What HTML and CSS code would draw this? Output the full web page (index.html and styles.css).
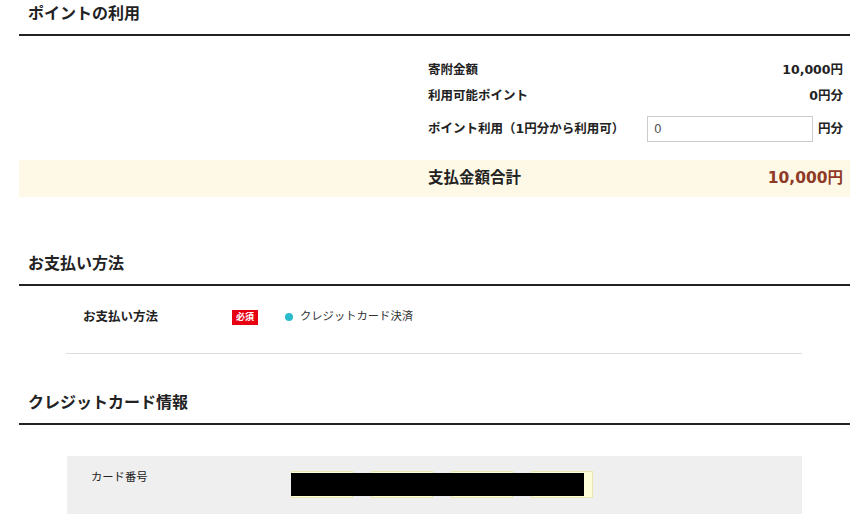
FILE: index.html
```html
<!DOCTYPE html>
<html lang="ja">
	<head>
		<meta charset="UTF-8" />
		<meta name="viewport" content="width=device-width, initial-scale=1.0" />
		<title>お支払い</title>
		<link rel="stylesheet" href="styles.css">
	</head>
	<body>
		<div class="page">
			<h2 class="sec-title">ポイントの利用</h2>
			<div class="point-table">
				<div class="pt-row">
					<span class="pt-label">寄附金額</span>
					<span class="pt-value">10,000円</span>
				</div>
				<div class="pt-row">
					<span class="pt-label">利用可能ポイント</span>
					<span class="pt-value">0円分</span>
				</div>
				<div class="pt-row pt-input-row">
					<span class="pt-label">ポイント利用（1円分から利用可）</span>
					<input class="pt-input" type="text" value="0" />
					<span class="pt-value">円分</span>
				</div>
			</div>
			<div class="sum-bar">
				<div class="sum-inner">
					<span class="sum-label">支払金額合計</span>
					<span class="sum-value">10,000円</span>
				</div>
			</div>

			<h2 class="sec-title sec-pay">お支払い方法</h2>
			<div class="pay-row">
				<span class="pay-label">お支払い方法</span>
				<span class="badge">必須</span>
				<span class="dot"></span>
				<span class="pay-method">クレジットカード決済</span>
			</div>

			<h2 class="sec-title sec-card">クレジットカード情報</h2>
			<div class="card-box">
				<div class="card-row">
					<span class="card-label">カード番号</span>
					<div class="card-inputs">
						<input class="card-input" type="text" />
						<input class="card-input" type="text" />
						<input class="card-input" type="text" />
						<input class="card-input" type="text" />
						<div class="redact"></div>
					</div>
				</div>
			</div>
		</div>
	</body>
</html>
```

FILE: styles.css
```css
body {
	margin: 0;
	font-family: "DejaVu Sans", "Noto Sans CJK JP", sans-serif;
	color: #222;
	background-color: #fff;
}
.page {
	width: 831px;
	margin-left: 19px;
}
.sec-title {
	margin: 0;
	padding: 2px 9px 8px;
	font-size: 16px;
	line-height: 24px;
	font-weight: bold;
	border-bottom: 2px solid #222;
}
.point-table {
	margin: 21px 7px 11px 409px;
}
.pt-row {
	display: flex;
	align-items: center;
	padding: 3px 0;
	font-size: 12.5px;
	line-height: 20px;
	font-weight: bold;
}
.pt-input-row {
	padding: 7px 0;
}
.pt-label {
	flex: 0 0 219px;
}
.pt-value {
	margin-left: auto;
}
.pt-input {
	width: 166px;
	height: 26px;
	box-sizing: border-box;
	border: 1px solid #ccc;
	padding: 0 6px;
	font-family: inherit;
	font-size: 12px;
	color: #555;
}
.sum-bar {
	background-color: #fef9e6;
	padding: 8px 7px 9px 409px;
}
.sum-inner {
	display: flex;
	justify-content: space-between;
	font-size: 15.5px;
	line-height: 20px;
	font-weight: bold;
}
.sum-value {
	color: #8f3a26;
}
.sec-pay {
	margin-top: 53px;
}
.pay-row {
	display: flex;
	align-items: center;
	margin: 0 48px 0 47px;
	padding: 21px 0 26px 17px;
	border-bottom: 1px solid #ddd;
	font-size: 11.3px;
	line-height: 20px;
}
.pay-label {
	flex: 0 0 149px;
	font-size: 12.5px;
	font-weight: bold;
}
.badge {
	display: inline-block;
	width: 26px;
	height: 15px;
	line-height: 15px;
	text-align: center;
	background-color: #e60012;
	color: #fff;
	font-size: 9px;
	font-weight: bold;
}
.dot {
	width: 8px;
	height: 8px;
	border-radius: 50%;
	background-color: #2bbccb;
	margin: 0 7px 0 27px;
}
.pay-method {
	color: #333;
}
.sec-card {
	margin-top: 35px;
}
.card-box {
	margin: 31px 48px 0 48px;
	background-color: #efefef;
	padding: 12px 0 20px 24px;
}
.card-row {
	display: flex;
	align-items: flex-start;
}
.card-label {
	flex: 0 0 200px;
	font-size: 11.3px;
	line-height: 20px;
	color: #222;
}
.card-inputs {
	position: relative;
	display: flex;
	gap: 18px;
	margin-top: 3px;
}
.card-input {
	width: 62px;
	height: 27px;
	box-sizing: border-box;
	border: 1px solid #e9e6b0;
	background-color: #fdfdd8;
}
.redact {
	position: absolute;
	left: 0;
	top: 2px;
	width: 293px;
	height: 23px;
	background-color: #000;
}
```
